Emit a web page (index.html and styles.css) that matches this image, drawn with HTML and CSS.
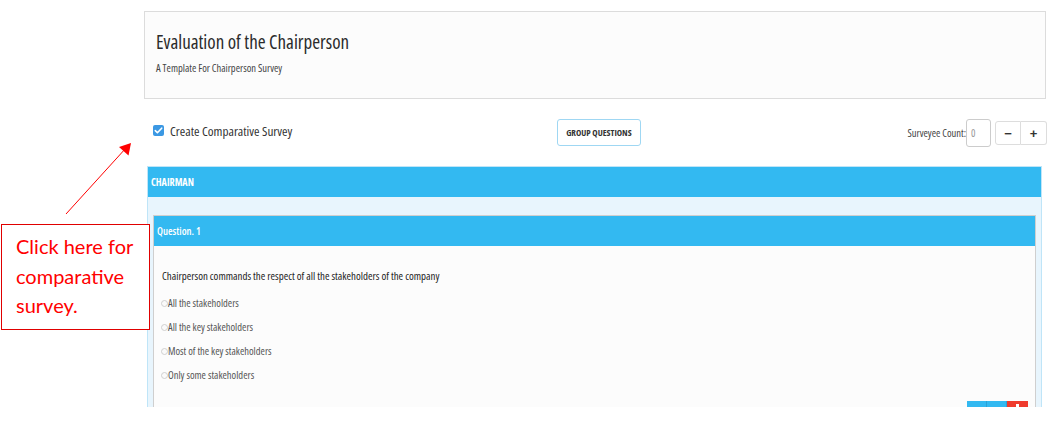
FILE: index.html
```html
<!DOCTYPE html>
<html lang="en">
<head>
<meta charset="utf-8">
<title>Evaluation of the Chairperson</title>
<link rel="stylesheet" href="styles.css">
</head>
<body>
<div class="sheet">
  <div class="content">
    <header class="card">
      <h1 class="title">Evaluation of the Chairperson</h1>
      <p class="subtitle">A Template For Chairperson Survey</p>
    </header>

    <div class="toolbar">
      <label class="check">
        <span class="check-box"><svg viewBox="0 0 11 11" width="11" height="11"><path d="M2.3 5.6 L4.4 7.7 L8.7 3.2" fill="none" stroke="#fff" stroke-width="1.6" stroke-linecap="round" stroke-linejoin="round"/></svg></span>
        <span class="check-label">Create Comparative Survey</span>
      </label>
      <button class="group-btn" type="button">GROUP QUESTIONS</button>
      <div class="count">
        <span class="count-label">Surveyee Count:</span>
        <span class="count-input">0</span>
        <div class="stepper">
          <span class="step">&minus;</span>
          <span class="step">+</span>
        </div>
      </div>
    </div>

    <section class="section">
      <div class="section-head">CHAIRMAN</div>
      <div class="section-body">
        <div class="question">
          <div class="q-head">Question. 1</div>
          <div class="q-body">
            <p class="q-text">Chairperson commands the respect of all the stakeholders of the company</p>
            <ul class="options">
              <li><span class="radio"></span>All the stakeholders</li>
              <li><span class="radio"></span>All the key stakeholders</li>
              <li><span class="radio"></span>Most of the key stakeholders</li>
              <li><span class="radio"></span>Only some stakeholders</li>
            </ul>
            <div class="actions">
              <span class="act act-blue"></span>
              <span class="act act-blue"></span>
              <span class="act act-red"><span class="act-glyph"></span></span>
            </div>
          </div>
        </div>
      </div>
    </section>
  </div>
</div>

<div class="callout">Click here for comparative survey.</div>
<svg class="arrow" width="80" height="80" viewBox="0 0 80 80">
  <line x1="6" y1="74" x2="66" y2="8" stroke="#ff0000" stroke-width="1"/>
  <polygon points="71,3 68.5,15.5 59,7" fill="#ff0000"/>
</svg>
</body>
</html>
```

FILE: styles.css
```css
* { box-sizing: border-box; }

html, body {
  margin: 0;
  padding: 0;
  background: #ffffff;
}

body {
  width: 1060px;
  height: 433px;
  overflow: hidden;
  position: relative;
  font-family: "Open Sans", "Liberation Sans Narrow", "Liberation Sans", sans-serif;
  font-stretch: 75%;
  color: #333333;
}

.sheet {
  height: 407px;
  overflow: hidden;
}

.content {
  width: 1046px;
  padding: 11px 0 0 144px;
}

/* header card */
.card {
  height: 88px;
  border: 1px solid #dcdcdc;
  background: #fcfcfc;
  padding: 18px 11px 0;
}

.title {
  margin: 0;
  font-size: 19px;
  line-height: 24px;
  font-weight: 500;
  color: #2b2b2b;
}

.subtitle {
  margin: 7px 0 0;
  font-size: 10.5px;
  line-height: 14px;
  color: #444444;
}

/* toolbar */
.toolbar {
  margin: 20px -1px 0 9px;
  height: 28px;
  display: flex;
  align-items: center;
  justify-content: space-between;
}

.check {
  display: flex;
  align-items: center;
  gap: 6px;
  margin-top: -5px;
}

.check-box {
  width: 11px;
  height: 11px;
  border-radius: 2px;
  background: #3b98e3;
  display: flex;
}

.check-label {
  font-size: 13.2px;
  line-height: 16px;
  color: #333333;
}

.group-btn {
  width: 84px;
  height: 27px;
  margin-top: -1px;
  margin-right: 2px;
  border: 1px solid #9fd7f3;
  border-radius: 3px;
  background: #ffffff;
  font-family: inherit;
  font-stretch: 75%;
  font-size: 9px;
  font-weight: 700;
  color: #333333;
  padding: 0;
}

.count {
  display: flex;
  align-items: center;
}

.count-label {
  font-size: 10.5px;
  color: #444444;
}

.count-input {
  width: 25px;
  height: 28px;
  border: 1px solid #cccccc;
  border-radius: 3px;
  font-size: 10.5px;
  line-height: 26px;
  padding-left: 4px;
  color: #999999;
  background: #ffffff;
}

.stepper {
  display: flex;
  margin-left: 4px;
  height: 24px;
}

.step {
  width: 26px;
  height: 24px;
  border: 1px solid #dddddd;
  display: flex;
  align-items: center;
  justify-content: center;
  font-family: "Liberation Sans", sans-serif;
  font-size: 13px;
  font-weight: 700;
  color: #333333;
  background: #ffffff;
}

.step:first-child {
  border-radius: 3px 0 0 3px;
}

.step:last-child {
  border-left: 0;
  border-radius: 0 3px 3px 0;
}

/* section panel */
.section {
  margin: 19px 4px 0 3px;
  border: 1px solid #bfe5f8;
  border-bottom: 0;
}

.section-head {
  height: 30px;
  background: #33b9f1;
  color: #ffffff;
  font-size: 10px;
  font-weight: 700;
  line-height: 30px;
  padding-left: 3px;
}

.section-body {
  background: #e8f5fd;
  padding: 18px 5px 0;
}

.question {
  border: 1px solid #cfcfcf;
  border-bottom: 0;
  background: #fcfcfc;
}

.q-head {
  height: 30px;
  background: #33b9f1;
  color: #ffffff;
  font-size: 10.5px;
  font-weight: 600;
  line-height: 30px;
  padding-left: 3px;
}

.q-body {
  padding: 23px 7px 0 8px;
}

.q-text {
  margin: 0;
  font-size: 10.9px;
  line-height: 14px;
  font-weight: 500;
  color: #222222;
}

.options {
  list-style: none;
  margin: 8px 0 0;
  padding: 0;
}

.options li {
  display: flex;
  align-items: center;
  height: 24px;
  font-size: 10.5px;
  color: #555555;
}

.radio {
  width: 7px;
  height: 7px;
  border: 1px solid #d0d0d0;
  border-radius: 50%;
  margin-left: -1px;
  background: #fafafa;
}

.actions {
  display: flex;
  justify-content: flex-end;
  margin-top: 14px;
  height: 20px;
}

.act {
  width: 20px;
  height: 20px;
  position: relative;
}

.act-blue {
  background: #33b9f1;
  border-right: 1px solid #2aa3d8;
}

.act-red {
  width: 21px;
  background: #ef3b2d;
}

.act-glyph {
  position: absolute;
  left: 9px;
  top: 3px;
  width: 3px;
  height: 3px;
  background: #ffffff;
}

/* annotation */
.callout {
  position: absolute;
  left: 1px;
  top: 224px;
  width: 149px;
  height: 106px;
  border: 1px solid #e00000;
  background: #ffffff;
  padding: 7px 0 0 14px;
  font-family: "Lato", "Open Sans", sans-serif;
  font-stretch: 100%;
  font-size: 20px;
  line-height: 29.5px;
  color: #ff0000;
}

.arrow {
  position: absolute;
  left: 60px;
  top: 140px;
}
```
